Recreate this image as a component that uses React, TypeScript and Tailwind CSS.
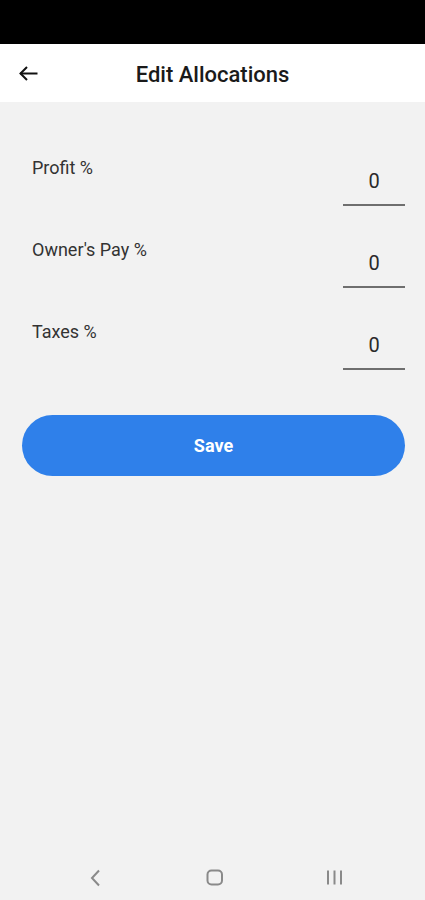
import React from "react";

const font = { fontFamily: "Roboto, 'Noto Sans', sans-serif" };

function Row({ label }: { label: string }) {
  return (
    <div className="flex h-[82px] items-start justify-between pl-8 pr-5">
      <div className="pt-[1px] text-[18px] leading-[22px] text-[#333]">{label}</div>
      <div className="mt-[13px] flex w-[62px] flex-col items-center">
        <div className="text-[20px] leading-[24px] text-[#2a2a2a]">0</div>
        <div className="mt-[11px] h-[1.5px] w-full bg-[#6f6f6f]" />
      </div>
    </div>
  );
}

export default function App() {
  return (
    <div className="flex h-[900px] w-[425px] flex-col bg-[#f2f2f2]" style={font}>
      <div className="h-[44px] bg-black" />
      <div className="relative flex h-[58px] items-center justify-center bg-white pt-[3px]">
        <svg className="absolute left-[18px] top-[21px]" width="20" height="17" viewBox="0 0 20 17" fill="none" stroke="#111" strokeWidth="2" strokeLinecap="square">
          <path d="M18.5 8.5H3" />
          <path d="M9 2L2.5 8.5L9 15" strokeLinecap="butt" />
        </svg>
        <div className="text-[22px] font-medium leading-[26px] text-[#1a1a1a]">Edit Allocations</div>
      </div>
      <div className="h-[54px]" />
      <Row label="Profit %" />
      <Row label="Owner's Pay %" />
      <Row label="Taxes %" />
      <div className="pl-[22px] pr-[20px] pt-[13px]">
        <button className="flex h-[61px] w-full items-center justify-center rounded-full bg-[#2f80ea] text-[18px] font-bold text-white">
          Save
        </button>
      </div>
      <div className="flex-1" />
      <div className="flex h-[46px] items-start justify-between pl-[89px] pr-[82px] pt-[15px]">
        <svg width="12" height="18" viewBox="0 0 12 18" fill="none" stroke="#8a8a8a" strokeWidth="2">
          <path d="M10 1.5L3 9L10 16.5" />
        </svg>
        <svg className="ml-[3px]" width="18" height="17" viewBox="0 0 18 17" fill="none" stroke="#8a8a8a" strokeWidth="2">
          <rect x="1.5" y="1.5" width="14.5" height="14" rx="4" />
        </svg>
        <svg width="17" height="17" viewBox="0 0 17 17" fill="none" stroke="#8a8a8a" strokeWidth="2">
          <path d="M2 1.5V15.5M8.5 1.5V15.5M15 1.5V15.5" />
        </svg>
      </div>
    </div>
  );
}
